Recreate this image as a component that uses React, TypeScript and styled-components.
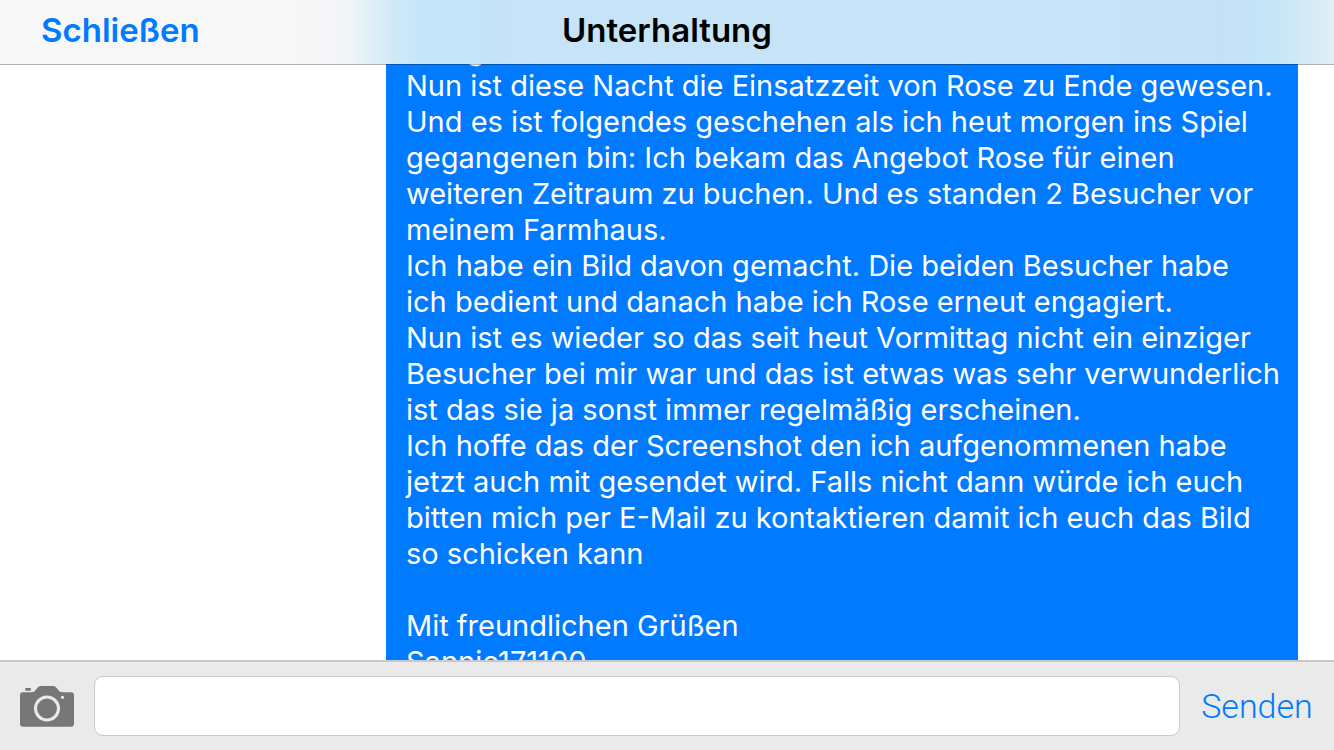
import React, { useState } from "react";
import styled, { createGlobalStyle } from "styled-components";

const GlobalStyle = createGlobalStyle`
  *, *::before, *::after { box-sizing: border-box; }
  body {
    margin: 0;
    background: #ffffff;
    font-family: Inter, "Liberation Sans", sans-serif;
  }
`;

const Screen = styled.div`
  display: flex;
  flex-direction: column;
  height: 100vh;
  overflow: hidden;
`;

const NavBar = styled.header`
  position: relative;
  z-index: 1;
  display: grid;
  grid-template-columns: 1fr auto 1fr;
  align-items: center;
  flex: none;
  height: 64px;
  padding: 0 41px 4px;
  background: linear-gradient(
    90deg,
    #f8f8f8 0,
    #f7f7f8 320px,
    #f2f5f8 345px,
    #e2f0f7 370px,
    #cfe8f6 395px,
    #c4e5f9 425px,
    #c6e3f8 520px,
    #c6e3f7 calc(100% - 220px),
    #c6e0f6 calc(100% - 120px),
    #c4e5f8 calc(100% - 60px),
    #d5eaf6 calc(100% - 25px),
    #e0eef6 100%
  );

  &::after {
    content: "";
    position: absolute;
    top: 100%;
    left: 0;
    right: 0;
    height: 1px;
    background: rgba(0, 0, 0, 0.3);
  }
`;

const CloseButton = styled.button`
  justify-self: start;
  padding: 0;
  border: 0;
  background: none;
  color: #007aff;
  font: 600 33px/40px Inter, "Liberation Sans", sans-serif;
  cursor: pointer;
`;

const Title = styled.h1`
  margin: 0;
  color: #000000;
  font-size: 33px;
  font-weight: 600;
  line-height: 40px;
`;

const Conversation = styled.main`
  display: flex;
  flex: 1;
  align-items: flex-start;
  justify-content: flex-end;
  min-height: 0;
  padding: 0 36px;
  overflow: hidden;
`;

const Bubble = styled.p`
  width: 912px;
  max-width: 100%;
  margin: -32px 0 0;
  padding: 0 12px 20px 20px;
  background: #007aff;
  color: #ffffff;
  font-size: 29px;
  line-height: 36px;
  white-space: pre-line;
`;

const Composer = styled.form`
  display: flex;
  flex: none;
  align-items: center;
  gap: 20px;
  height: 90px;
  padding: 0 20px;
  border-top: 2px solid #c8c8ca;
  background: #eaeaea;
`;

const CameraButton = styled.button`
  display: block;
  flex: none;
  padding: 0;
  border: 0;
  background: none;
  cursor: pointer;

  svg { display: block; }
`;

const MessageInput = styled.input`
  flex: 1;
  min-width: 0;
  height: 60px;
  padding: 0 16px;
  border: 1px solid #c8c8cd;
  border-radius: 9px;
  outline: none;
  background: #ffffff;
  color: #000000;
  font: 400 29px/36px Inter, "Liberation Sans", sans-serif;
`;

const SendButton = styled.button`
  flex: none;
  width: 114px;
  padding: 0;
  border: 0;
  background: none;
  color: #007aff;
  font: 300 34px/40px Roboto, "Liberation Sans", sans-serif;
  white-space: nowrap;
  cursor: pointer;
`;

const message = `Anlage
Nun ist diese Nacht die Einsatzzeit von Rose zu Ende gewesen.
Und es ist folgendes geschehen als ich heut morgen ins Spiel
gegangenen bin: Ich bekam das Angebot Rose für einen
weiteren Zeitraum zu buchen. Und es standen 2 Besucher vor
meinem Farmhaus.
Ich habe ein Bild davon gemacht. Die beiden Besucher habe
ich bedient und danach habe ich Rose erneut engagiert.
Nun ist es wieder so das seit heut Vormittag nicht ein einziger
Besucher bei mir war und das ist etwas was sehr verwunderlich
ist das sie ja sonst immer regelmäßig erscheinen.
Ich hoffe das der Screenshot den ich aufgenommenen habe
jetzt auch mit gesendet wird. Falls nicht dann würde ich euch
bitten mich per E-Mail zu kontaktieren damit ich euch das Bild
so schicken kann

Mit freundlichen Grüßen
Sannie171100`;

const CameraIcon = () => (
  <svg width="54" height="42" viewBox="0 0 54 42" aria-hidden="true">
    <rect x="5.300" y="3" width="5.700" height="2.700" rx="0.800" fill="#777777" />
    <path
      d="M3 7.300H11C14 7.300 15 6 16.500 4C18 2 19 1 21 1H33C35 1 36 2 37.500 4C39 6 40 7.300 43 7.300H51C53 7.300 54 8.300 54 10.300V38.700C54 40.700 53 41.700 51 41.700H3C1 41.700 0 40.700 0 38.700V10.300C0 8.300 1 7.300 3 7.300Z"
      fill="#777777"
    />
    <circle cx="27" cy="23.500" r="11.500" fill="none" stroke="#eaeaea" strokeWidth="3" />
    <circle cx="42.500" cy="12.300" r="1.600" fill="#eaeaea" />
  </svg>
);

export default function App() {
  const [draft, setDraft] = useState("");

  return (
    <>
      <GlobalStyle />
      <Screen>
        <NavBar>
          <CloseButton type="button">Schließen</CloseButton>
          <Title>Unterhaltung</Title>
        </NavBar>
        <Conversation>
          <Bubble>{message}</Bubble>
        </Conversation>
        <Composer onSubmit={(event) => event.preventDefault()}>
          <CameraButton type="button" aria-label="Foto aufnehmen">
            <CameraIcon />
          </CameraButton>
          <MessageInput
            type="text"
            aria-label="Nachricht"
            value={draft}
            onChange={(event) => setDraft(event.target.value)}
          />
          <SendButton type="submit">Senden</SendButton>
        </Composer>
      </Screen>
    </>
  );
}
